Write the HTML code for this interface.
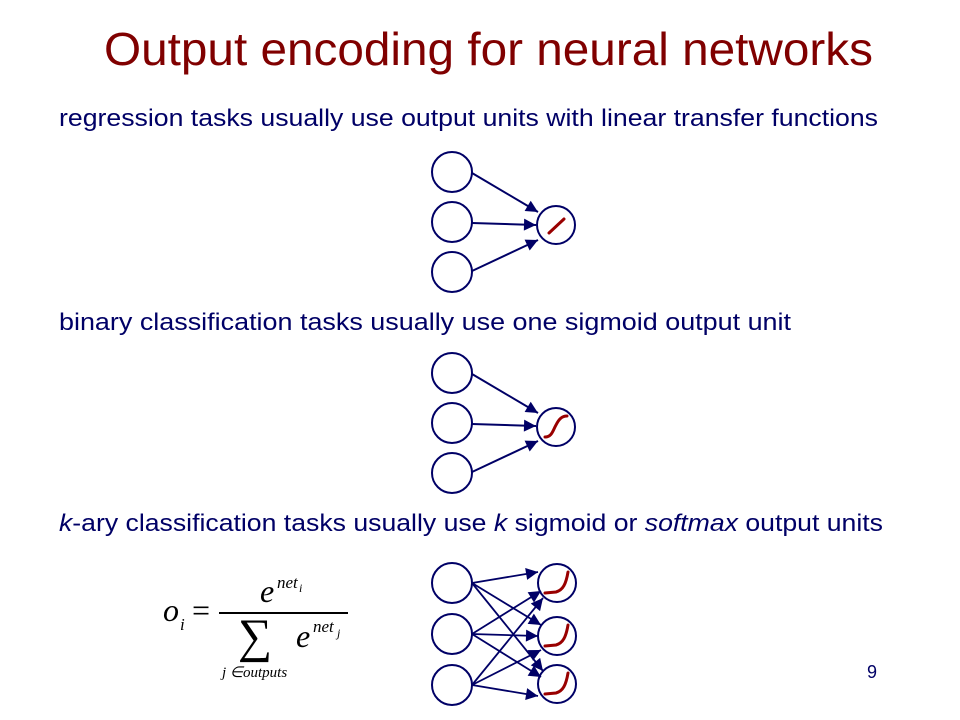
<!DOCTYPE html>
<html><head><meta charset="utf-8"><style>
html,body{margin:0;padding:0;background:#fff;}
svg{display:block;}
</style></head><body>
<svg width="960" height="720" viewBox="0 0 960 720" xmlns="http://www.w3.org/2000/svg">
<defs>
<marker id="b" viewBox="0 0 10 10" refX="10" refY="5" markerWidth="14" markerHeight="12" orient="auto" markerUnits="userSpaceOnUse">
<path d="M0,0 L10,5 L0,10 z" fill="#000066"/>
</marker>
</defs>
<g font-family="Liberation Sans, sans-serif">
<text x="104" y="65" font-size="46" fill="#800000" textLength="769" lengthAdjust="spacingAndGlyphs">Output encoding for neural networks</text>
<g fill="#000066" font-size="24">
<text x="59" y="126" textLength="819" lengthAdjust="spacingAndGlyphs">regression tasks usually use output units with linear transfer functions</text>
<text x="59" y="330" textLength="732" lengthAdjust="spacingAndGlyphs">binary classification tasks usually use one sigmoid  output unit</text>
<text x="59" y="531" textLength="824" lengthAdjust="spacingAndGlyphs"><tspan font-style="italic">k</tspan>-ary classification tasks usually use <tspan font-style="italic">k</tspan> sigmoid or <tspan font-style="italic">softmax</tspan> output units</text>
</g>
<text x="867" y="678" font-size="18" fill="#000066">9</text>
</g>

<g fill="none" stroke="#000066" stroke-width="2">
<circle cx="452" cy="172" r="20"/><circle cx="452" cy="222" r="20"/><circle cx="452" cy="272" r="20"/>
<circle cx="556" cy="225" r="19"/>
<line x1="472" y1="173" x2="538" y2="212" marker-end="url(#b)"/>
<line x1="472" y1="223" x2="536" y2="225" marker-end="url(#b)"/>
<line x1="472" y1="271" x2="538" y2="240" marker-end="url(#b)"/>
<circle cx="452" cy="373" r="20"/><circle cx="452" cy="423" r="20"/><circle cx="452" cy="473" r="20"/>
<circle cx="556" cy="427" r="19"/>
<line x1="472" y1="374" x2="538" y2="413" marker-end="url(#b)"/>
<line x1="472" y1="424" x2="536" y2="426" marker-end="url(#b)"/>
<line x1="472" y1="472" x2="538" y2="441" marker-end="url(#b)"/>
<circle cx="452" cy="583" r="20"/><circle cx="452" cy="634" r="20"/><circle cx="452" cy="685" r="20"/>
<circle cx="557" cy="583" r="19"/><circle cx="557" cy="636" r="19"/><circle cx="557" cy="684" r="19"/>
<g stroke-width="1.8">
<line x1="472" y1="583" x2="538" y2="572" marker-end="url(#b)"/>
<line x1="472" y1="583" x2="541" y2="625" marker-end="url(#b)"/>
<line x1="472" y1="583" x2="543" y2="671" marker-end="url(#b)"/>
<line x1="472" y1="634" x2="541" y2="591" marker-end="url(#b)"/>
<line x1="472" y1="634" x2="538" y2="636" marker-end="url(#b)"/>
<line x1="472" y1="634" x2="541" y2="677" marker-end="url(#b)"/>
<line x1="472" y1="685" x2="543" y2="598" marker-end="url(#b)"/>
<line x1="472" y1="685" x2="541" y2="650" marker-end="url(#b)"/>
<line x1="472" y1="685" x2="538" y2="696" marker-end="url(#b)"/>
</g>
</g>

<g fill="none" stroke="#990000" stroke-width="3" stroke-linecap="round">
<line x1="549" y1="233" x2="564" y2="219"/>
<path d="M545,437 C552,437 553,430 556,425 C559,419 562,416 567,416"/>
<path d="M545,593 L556,592 C563,590 566,584 568,572"/>
<path d="M545,646 L556,645 C563,643 566,637 568,625"/>
<path d="M545,694 L556,693 C563,691 566,685 568,673"/>
</g>

<g font-family="Liberation Serif, serif" fill="#000">
<text x="163" y="621" font-size="32" font-style="italic">o</text>
<text x="180" y="630" font-size="17" font-style="italic">i</text>
<text x="192" y="621" font-size="32">=</text>
<line x1="219" y1="613" x2="348" y2="613" stroke="#000" stroke-width="2"/>
<text x="260" y="602" font-size="32" font-style="italic">e</text>
<text x="277" y="588" font-size="17" font-style="italic">net</text>
<text x="299" y="592" font-size="12" font-style="italic">i</text>
<text x="238" y="652" font-size="48">∑</text>
<text x="296" y="647" font-size="32" font-style="italic">e</text>
<text x="313" y="632" font-size="17" font-style="italic">net</text>
<text x="337" y="637" font-size="12" font-style="italic">j</text>
<text x="222" y="677" font-size="15" font-style="italic">j ∈outputs</text>
</g>
</svg>
</body></html>
